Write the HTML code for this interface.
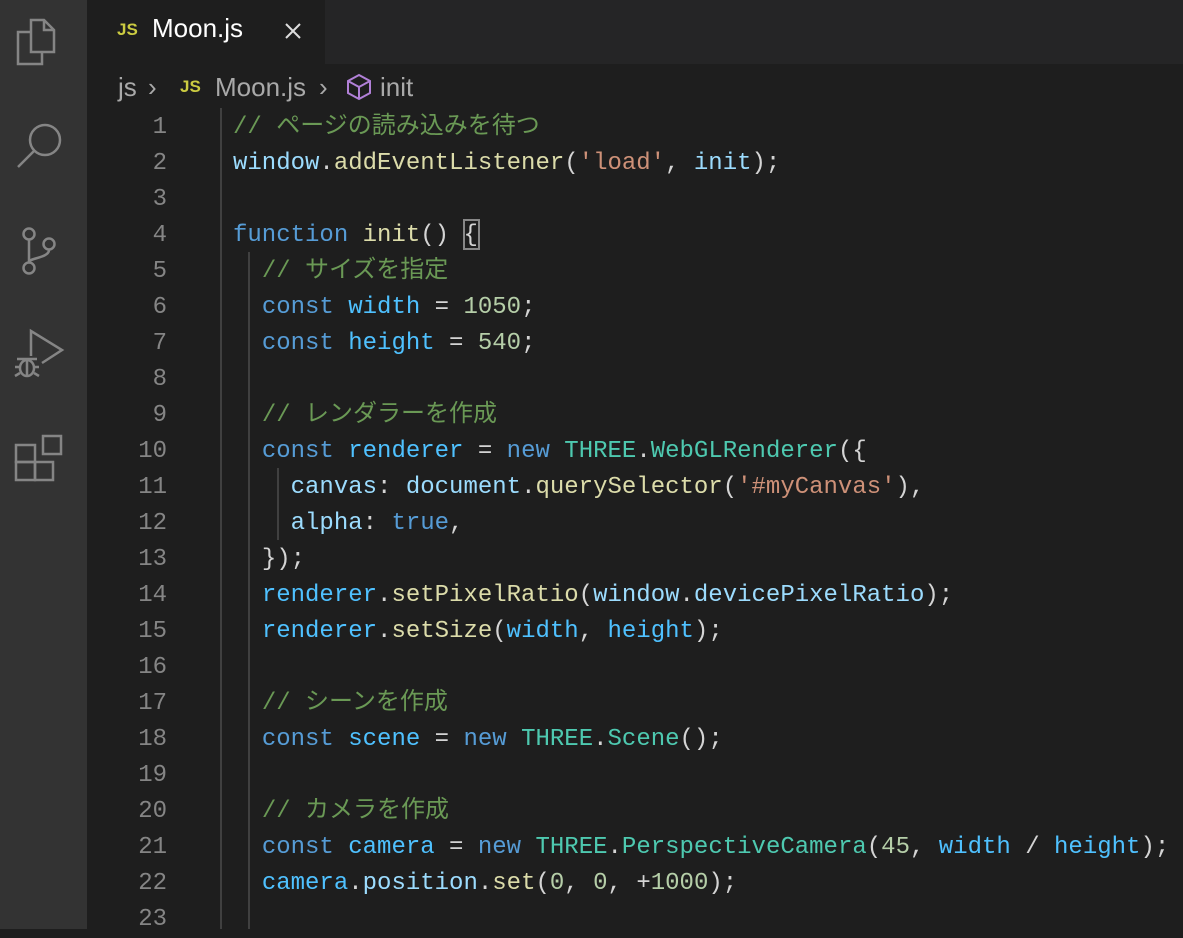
<!DOCTYPE html>
<html><head><meta charset="utf-8"><style>
*{margin:0;padding:0;box-sizing:border-box}
html,body{width:1183px;height:929px}
body{background:#1e1e1e;overflow:hidden;position:relative;font-family:"Liberation Sans","Noto Sans CJK JP",sans-serif}
#act{position:absolute;left:0;top:0;width:87px;height:929px;background:#333333}
#tabs{position:absolute;left:87px;top:0;right:0;height:64px;background:#252526}
#tab{position:absolute;left:87px;top:0;width:238px;height:64px;background:#1e1e1e}
.js{color:#cbcb41;font-weight:bold;font-size:17px;letter-spacing:0px}
.code{position:absolute;left:0;font-family:"Liberation Mono","Noto Sans CJK JP",monospace;font-size:24px;white-space:pre;line-height:36px;height:36px}
.ln{position:absolute;width:167px;text-align:right;color:#858585;font-family:"Liberation Mono",monospace;font-size:24px;line-height:36px}
.k{color:#569cd6}.v{color:#9cdcfe}.f{color:#dcdcaa}.c{color:#4ec9b0}.s{color:#ce9178}.n{color:#b5cea8}.cm{color:#6a9955}.p{color:#d4d4d4}.cn{color:#4fc1ff}
.g{position:absolute;width:2px;background:#404040}
.bc{position:absolute;top:72px;font-size:26px;color:#a9a9a9;white-space:nowrap;line-height:30px}
</style></head><body>
<div id="act">
<svg width="87" height="500" viewBox="0 0 87 500" fill="none" stroke="#858585" stroke-width="2.5">
<path d="M31 20h13l10 10v22H31z M44 20v10h10"/>
<path d="M31 32H18v32h24v-12"/>
<circle cx="45" cy="140" r="15"/><path d="M34 151L18 167"/>
<circle cx="29" cy="234" r="5.5"/><circle cx="49" cy="244" r="5.5"/><circle cx="29" cy="268" r="5.5"/>
<path d="M29 240v22 M49 250c0 8-20 8-20 12"/>
<path d="M31 356V331l31 19-20 13"/>
<ellipse cx="27" cy="368" rx="7" ry="8"/><path d="M17 359h20 M15 376l5-3 M39 376l-5-3 M15 367h5 M34 367h5 M27 360v16"/>
<rect x="16" y="445" width="19" height="17"/><rect x="16" y="462" width="19" height="18"/><rect x="35" y="462" width="18" height="18"/><rect x="43" y="436" width="18" height="18"/>
</svg>
</div>
<div id="tabs"></div>
<div id="tab">
<span class="js" style="position:absolute;left:30px;top:20px">JS</span>
<span style="position:absolute;left:65px;top:13px;color:#ffffff;font-size:26px">Moon.js</span>
<svg style="position:absolute;left:197px;top:22px" width="18" height="18"><path d="M2 2L16 16M16 2L2 16" stroke="#ddd" stroke-width="2"/></svg>
</div>
<span class="bc" style="left:118px">js</span>
<span class="bc" style="left:148px">›</span>
<span class="js" style="position:absolute;left:180px;top:77px">JS</span>
<span class="bc" style="left:215px">Moon.js</span>
<span class="bc" style="left:319px">›</span>
<svg style="position:absolute;left:345px;top:73px" width="28" height="28" fill="none" stroke="#b180d7" stroke-width="2"><path d="M14 2L25 8v12L14 26 3 20V8z M3 8l11 6 11-6 M14 14v12"/></svg>
<span class="bc" style="left:380px">init</span>
<div class="g" style="left:220px;top:108px;height:821px"></div>
<div class="g" style="left:248px;top:252px;height:677px"></div>
<div class="g" style="left:277px;top:468px;height:72px"></div>
<div style="position:absolute;left:463px;top:219px;width:17px;height:31px;border:2px solid #888"></div>
<div id="lines"></div>
<script>
const L=[
'<span class="cm">// ページの読み込みを待つ</span>',
'<span class="v">window</span><span class="p">.</span><span class="f">addEventListener</span><span class="p">(</span><span class="s">\'load\'</span><span class="p">, </span><span class="v">init</span><span class="p">);</span>',
'',
'<span class="k">function</span><span class="p"> </span><span class="f">init</span><span class="p">() {</span>',
'  <span class="cm">// サイズを指定</span>',
'  <span class="k">const</span> <span class="cn">width</span><span class="p"> = </span><span class="n">1050</span><span class="p">;</span>',
'  <span class="k">const</span> <span class="cn">height</span><span class="p"> = </span><span class="n">540</span><span class="p">;</span>',
'',
'  <span class="cm">// レンダラーを作成</span>',
'  <span class="k">const</span> <span class="cn">renderer</span><span class="p"> = </span><span class="k">new</span> <span class="c">THREE</span><span class="p">.</span><span class="c">WebGLRenderer</span><span class="p">({</span>',
'    <span class="v">canvas</span><span class="p">: </span><span class="v">document</span><span class="p">.</span><span class="f">querySelector</span><span class="p">(</span><span class="s">\'#myCanvas\'</span><span class="p">),</span>',
'    <span class="v">alpha</span><span class="p">: </span><span class="k">true</span><span class="p">,</span>',
'  <span class="p">});</span>',
'  <span class="cn">renderer</span><span class="p">.</span><span class="f">setPixelRatio</span><span class="p">(</span><span class="v">window</span><span class="p">.</span><span class="v">devicePixelRatio</span><span class="p">);</span>',
'  <span class="cn">renderer</span><span class="p">.</span><span class="f">setSize</span><span class="p">(</span><span class="cn">width</span><span class="p">, </span><span class="cn">height</span><span class="p">);</span>',
'',
'  <span class="cm">// シーンを作成</span>',
'  <span class="k">const</span> <span class="cn">scene</span><span class="p"> = </span><span class="k">new</span> <span class="c">THREE</span><span class="p">.</span><span class="c">Scene</span><span class="p">();</span>',
'',
'  <span class="cm">// カメラを作成</span>',
'  <span class="k">const</span> <span class="cn">camera</span><span class="p"> = </span><span class="k">new</span> <span class="c">THREE</span><span class="p">.</span><span class="c">PerspectiveCamera</span><span class="p">(</span><span class="n">45</span><span class="p">, </span><span class="cn">width</span><span class="p"> / </span><span class="cn">height</span><span class="p">);</span>',
'  <span class="cn">camera</span><span class="p">.</span><span class="v">position</span><span class="p">.</span><span class="f">set</span><span class="p">(</span><span class="n">0</span><span class="p">, </span><span class="n">0</span><span class="p">, +</span><span class="n">1000</span><span class="p">);</span>',
''];
let h='';
L.forEach((t,i)=>{const y=110+i*36;
h+=`<div class="ln" style="top:${y}px">${i+1}</div><div class="code p" style="top:${y}px;left:233px">${t}</div>`;});
document.getElementById('lines').innerHTML=h;
</script>
</body></html>
